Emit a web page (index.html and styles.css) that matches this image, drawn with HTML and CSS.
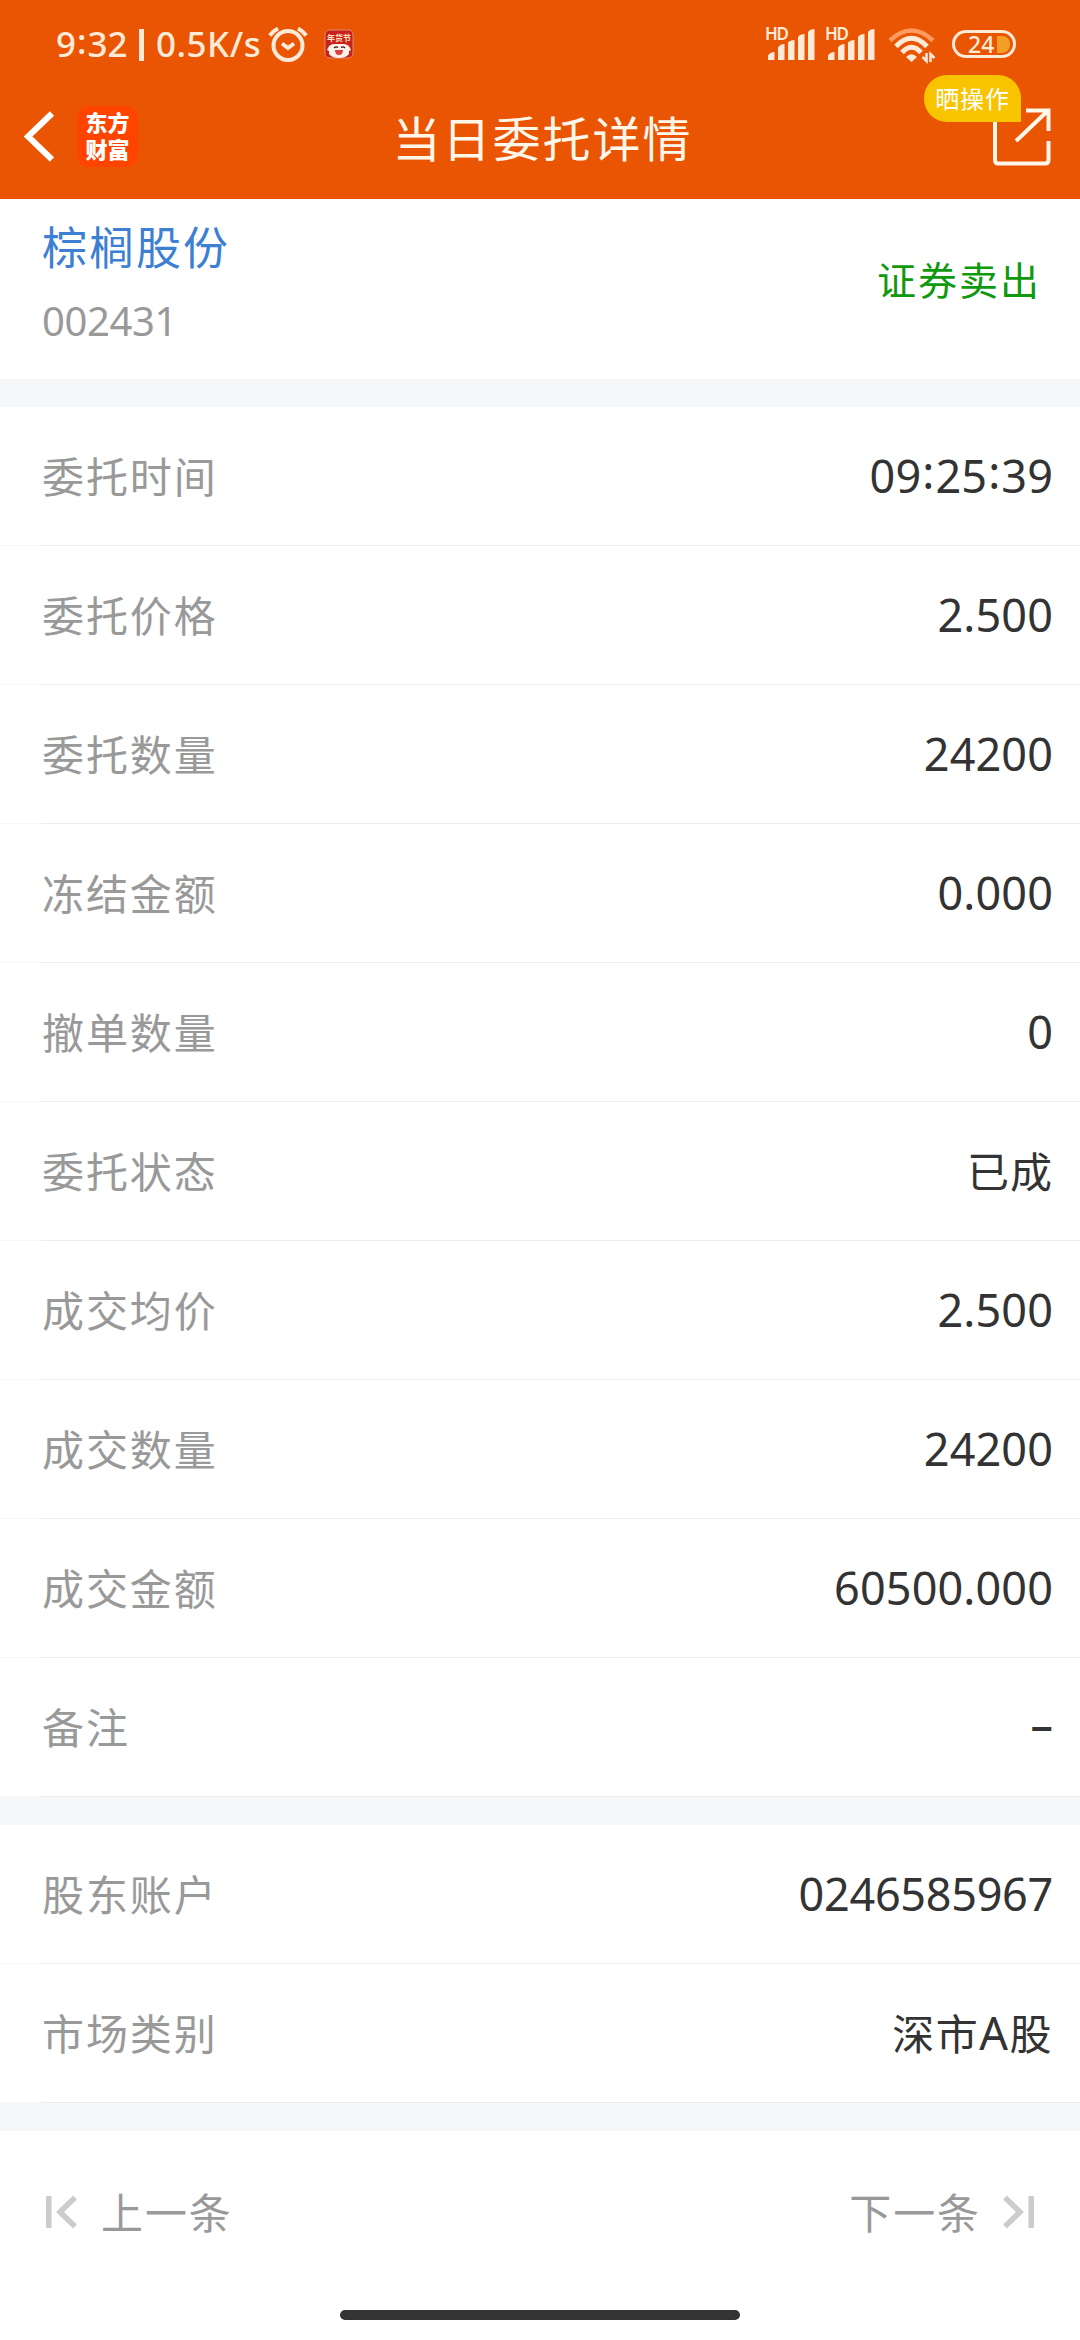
FILE: index.html
```html
<!DOCTYPE html>
<html lang="zh-CN">
<head>
<meta charset="utf-8">
<title>当日委托详情</title>
<link rel="stylesheet" href="styles.css">
</head>
<body>
<header class="top">
  <div class="status">
    <span class="clock">9<i class="colon">:</i>32</span>
    <span class="divider"></span>
    <span class="speed">0.5K/s</span>
    <svg class="alarm" width="40" height="38" viewBox="0 0 40 38" fill="none" stroke="#ffead8" stroke-width="4"><circle cx="20" cy="20.5" r="14.5"/><path d="M1.8 10.500Q5 6 10 3.400M38.200 10.500Q35 6 30 3.400M14 18.500l6 4.500 6-4.500"/></svg>
    <svg class="mascot" width="28" height="28" viewBox="0 0 28 28"><rect width="28" height="28" rx="5" fill="#c8201d"/><path d="M0 23V5Q0 0 5 0h18q5 0 5 5v18q0 5-5 5H5q-5 0-5-5z" fill="none" stroke="#dc8a70"/><text x="14" y="11" text-anchor="middle" class="mascot-text">年货节</text><path d="M2 20q2-6 7-6h10q5 0 7 6l-2 1v3q-3 4-10 4T4 24v-3z" fill="#fff0e8"/><path d="M9 18q2-2 4-.5m3 0q2-1.500 4 .5" fill="none" stroke="#311" stroke-width="1.200"/><path d="M10 20h8q0 5-4 5t-4-5z" fill="#d93f45"/></svg>
    <span class="spacer"></span>
    <svg class="signal" width="52" height="38" viewBox="0 0 52 38"><text x="1" y="16" class="hd" textLength="24">HD</text><path d="M4 36V31.500Q6 28 10.500 28v8zM14 36V23.500Q16 20 20.500 20v16zM24 36V18.500Q26 16 30.500 16v20zM34 36V13Q36 10 40.500 10v26zM44 36V8Q46 5 50.500 5v31z"/></svg>
    <svg class="signal second" width="52" height="38" viewBox="0 0 52 38"><text x="1" y="16" class="hd" textLength="24">HD</text><path d="M4 36V31.500Q6 28 10.500 28v8zM14 36V23.500Q16 20 20.500 20v16zM24 36V18.500Q26 16 30.500 16v20zM34 36V13Q36 10 40.500 10v26zM44 36V8Q46 5 50.500 5v31z"/></svg>
    <svg class="wifi" width="50" height="38" viewBox="0 0 50 38" fill="none" stroke="#ffead8"><path d="M3 15.500Q24.500-4.500 46 15.500" stroke="#ff9a61" stroke-width="4.500"/><path d="M9 21.500Q24.500 5 40 21.500M15 27.500Q24.500 17 34 27.500" stroke-width="5"/><path d="M19 32q5.500-5.500 11 0l-5.500 5z" fill="#ffead8" stroke="none"/><path d="M39.500 28v8l-4-4M43.500 37v-8l4 4" stroke-width="2.500"/></svg>
    <div class="battery"><span>24</span><i></i></div>
  </div>
  <nav class="bar">
    <svg class="back" width="30" height="52" viewBox="0 0 30 52" fill="none" stroke="#fff" stroke-width="6"><path d="M28 3.500 4 26.500 28 49.500"/></svg>
    <div class="logo"><span>东方</span><span>财富</span></div>
    <h1>当日委托详情</h1>
    <div class="share">
      <svg width="62" height="62" viewBox="0 0 62 62" fill="none" stroke="#fff7ea" stroke-width="4"><path d="M5 0v55q0 3.500 3.500 3.500h46.500q3.500 0 3.500-3.500V36M36 5.500h22.500V26M26 36 57 6.500"/></svg>
      <span class="badge">晒操作</span>
    </div>
  </nav>
</header>
<section class="stock">
  <div><div class="name">棕榈股份</div><div class="code">002431</div></div>
  <div class="side">证券卖出</div>
</section>
<dl class="group">
  <div class="row"><dt>委托时间</dt><dd>09<i class="colon">:</i>25<i class="colon">:</i>39</dd></div>
  <div class="row"><dt>委托价格</dt><dd>2.500</dd></div>
  <div class="row"><dt>委托数量</dt><dd>24200</dd></div>
  <div class="row"><dt>冻结金额</dt><dd>0.000</dd></div>
  <div class="row"><dt>撤单数量</dt><dd>0</dd></div>
  <div class="row"><dt>委托状态</dt><dd class="cjk">已成</dd></div>
  <div class="row"><dt>成交均价</dt><dd>2.500</dd></div>
  <div class="row"><dt>成交数量</dt><dd>24200</dd></div>
  <div class="row"><dt>成交金额</dt><dd>60500.000</dd></div>
  <div class="row"><dt>备注</dt><dd class="dash">–</dd></div>
</dl>
<dl class="group">
  <div class="row"><dt>股东账户</dt><dd class="account">0246585967</dd></div>
  <div class="row"><dt>市场类别</dt><dd class="cjk market">深市<b>A</b>股</dd></div>
</dl>
<footer class="pager">
  <div class="pages">
    <div class="page"><svg width="32" height="34" viewBox="0 0 32 34" fill="none" stroke="#ccc" stroke-width="5.500"><path d="M2.800 1v32M29 2.500 14 17l15 14.500"/></svg><span>上一条</span></div>
    <div class="page"><span>下一条</span><svg width="32" height="34" viewBox="0 0 32 34" fill="none" stroke="#ccc" stroke-width="5.500"><path d="M29.200 1v32M3 2.500 18 17 3 31.500"/></svg></div>
  </div>
  <div class="home"></div>
</footer>
</body>
</html>
```
FILE: styles.css
```css
* { box-sizing: border-box; }
body { margin: 0; width: 1080px; height: 2340px; overflow: hidden; background: #f6f7f9; font-family: "Noto Sans", "Noto Sans CJK SC", sans-serif; color: #333; display: flex; flex-direction: column; }
svg { display: block; flex: none; overflow: visible; }
i { font-style: normal; }
.top { height: 199px; flex: none; background: #ea5504; }
.status { height: 75px; padding: 25px 64px 0 56px; display: flex; align-items: flex-start; color: #ffead8; font-size: 35px; font-weight: 500; line-height: 38px; white-space: nowrap; }
.clock { width: 83px; }
.colon { position: relative; top: -0.09em; padding: 0 1px; }
.divider { width: 5px; height: 32px; margin-top: 4px; background: #ffead8; }
.speed { width: 111px; padding-left: 12px; letter-spacing: 0.5px; }
.alarm { margin-left: 12.500px; }
.mascot { margin: 5px 0 0 17.500px; }
.mascot-text { font: bold 8px "Noto Sans CJK SC", sans-serif; fill: #ffe3bd; }
.spacer { flex: 1; }
.signal { fill: #ffead8; margin: -1px 8px 0 0; }
.signal.second { margin-right: 11px; }
.hd { font: 600 17px "Noto Sans", sans-serif; }
.wifi { margin: 0 15px 0 0; }
.battery { width: 64px; height: 28px; margin-top: 5px; border: 3px solid #ffead8; border-radius: 14px; display: flex; align-items: center; padding-left: 13px; font-size: 23px; font-weight: 500; line-height: 22px; }
.battery span { width: 29px; }
.battery i { width: 13px; height: 17px; background: #f1a024; border-radius: 0 8px 8px 0; }
.bar { height: 124px; padding: 0 30px 0 24px; display: flex; align-items: flex-start; }
.back { margin-top: 35px; }
.logo { width: 61px; height: 61px; margin: 31px 0 0 23px; border-radius: 12px; background: #ff4400; color: #fff; font: 900 22px/27px "Noto Sans CJK SC", sans-serif; text-align: center; padding-top: 2px; }
.logo span { display: block; }
h1 { flex: 1; margin: 26px 0 0; padding-right: 44px; padding-left: 1px; text-align: center; font: 400 48px/70px "Noto Sans CJK SC", sans-serif; letter-spacing: 2px; color: #fff7ea; }
.share { width: 62px; height: 62px; margin: 30px -2px 0 0; position: relative; }
.badge { position: absolute; right: 31px; top: -30px; width: 97px; height: 47px; border-radius: 23px 23px 0 23px; background: #f8c400; color: #fff; font: 400 24px/46px "Noto Sans CJK SC", sans-serif; letter-spacing: 0.8px; text-align: center; white-space: nowrap; }
.stock { height: 180px; flex: none; background: #fff; padding: 0 39px 0 42px; display: flex; justify-content: space-between; }
.name { margin-top: 16px; font: 400 45px/62px "Noto Sans CJK SC", sans-serif; letter-spacing: 2px; color: #3c7fd3; }
.code { margin-top: 16px; font-size: 40px; line-height: 56px; letter-spacing: -0.4px; color: #999; }
.side { margin-top: 49px; font: 400 39px/60px "Noto Sans CJK SC", sans-serif; letter-spacing: 2px; color: #0e990e; }
.group { margin: 28px 0 0; flex: none; background: #fff; }
.row { height: 139px; padding: 0 27px 1px 42px; background: linear-gradient(to right, #f8f8f8 41px, #ececee 41px) bottom / 100% 1px no-repeat; display: flex; justify-content: space-between; align-items: center; }
dt { margin-top: -3px; font: 400 42px/60px "Noto Sans CJK SC", sans-serif; letter-spacing: 1.900px; color: #999; }
dd { margin: 0; font-size: 45px; line-height: 60px; letter-spacing: 0.1px; }
dd.cjk { margin-top: -2px; font: 400 42px/60px "Noto Sans CJK SC", sans-serif; letter-spacing: 1px; }
dd.account { letter-spacing: -0.3px; }
dd.market { letter-spacing: 1.500px; }
.market b { font: 400 45px "Noto Sans", sans-serif; }
dd.dash { margin-top: -6px; font-weight: 500; }
.pager { flex: 1; margin-top: 28px; background: #fff; display: flex; flex-direction: column; justify-content: space-between; align-items: center; padding-bottom: 20px; }
.pages { width: 100%; padding: 52px 46px 0 46px; display: flex; justify-content: space-between; }
.page { display: flex; align-items: center; gap: 23px; font: 400 42px/60px "Noto Sans CJK SC", sans-serif; letter-spacing: 1.900px; color: #999; }
.page span { margin-top: -2px; }
.page + .page { gap: 21px; }
.home { width: 400px; height: 10px; border-radius: 5px; background: #333; }
```
